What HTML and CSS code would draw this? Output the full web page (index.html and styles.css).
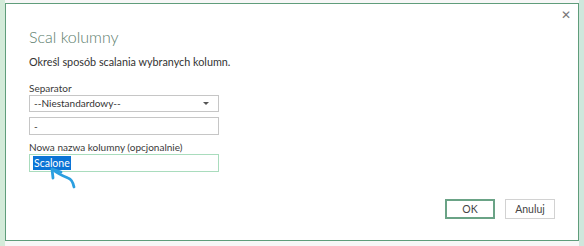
FILE: index.html
```html
<!DOCTYPE html>
<html lang="pl">
<head>
  <meta charset="UTF-8">
  <title>Scal kolumny</title>
  <link rel="stylesheet" href="styles.css">
</head>
<body>
  <div class="dialog">
    <div class="dialog-top">
      <span class="close">&#x2715;</span>
    </div>
    <h1>Scal kolumny</h1>
    <p class="lead">Określ sposób scalania wybranych kolumn.</p>

    <label class="label">Separator</label>
    <div class="select">
      <span>--Niestandardowy--</span>
      <span class="caret"></span>
    </div>
    <div class="field">-</div>

    <label class="label">Nowa nazwa kolumny (opcjonalnie)</label>
    <div class="field field-active">
      <span class="selected">Scalone</span>
      <!-- odręczna strzałka -->
      <svg class="pointer" width="30" height="26" viewBox="0 0 30 26">
        <path d="M3 3 C 9 8, 14 10, 19 12 C 22 13, 24 16, 25 21" fill="none" stroke="#2b9fe0" stroke-width="2.8" stroke-linecap="round"/>
        <path d="M4 12 L 3 3 L 12 6" fill="none" stroke="#2b9fe0" stroke-width="2.8" stroke-linecap="round" stroke-linejoin="round"/>
      </svg>
    </div>

    <div class="actions">
      <button class="btn btn-primary">OK</button>
      <button class="btn">Anuluj</button>
    </div>
  </div>
</body>
</html>
```

FILE: styles.css
```css
* {
  box-sizing: border-box;
}
body {
  margin: 0;
  width: 584px;
  height: 246px;
  overflow: hidden;
  font-family: 'Lato', sans-serif;
  color: #333;
  background:
    linear-gradient(to right, #d3ebd9 0, #d3ebd9 5px, transparent 5px),
    linear-gradient(to left, #cfe7dc 0, #cfe7dc 5px, transparent 5px),
    #f7f7f7;
  padding: 3px 5px 5px 5px;
}
.dialog {
  position: relative;
  height: 238px;
  background: white;
  border: 1px solid #5f9d7b;
  padding: 0 23px 0 23px;
}
.dialog-top {
  display: flex;
  justify-content: flex-end;
  height: 20px;
  margin-right: -16px;
  padding-top: 4px;
}
.close {
  font-family: 'DejaVu Sans', sans-serif;
  font-size: 12px;
  line-height: 14px;
  color: #777;
}
h1 {
  margin: 2px 0 0;
  font-size: 16px;
  font-weight: 300;
  color: #5b7d6c;
  line-height: 22px;
}
.lead {
  margin: 7px 0 12px;
  font-size: 10.8px;
  line-height: 14px;
}
.label {
  display: block;
  font-size: 10px;
  line-height: 14px;
  color: #3a3a3a;
}
.select, .field {
  width: 190px;
  height: 17px;
  border: 1px solid #c6c6c6;
  font-size: 10px;
  line-height: 15px;
  padding: 0 4px;
  display: flex;
  align-items: center;
  justify-content: space-between;
}
.field {
  height: 18px;
  margin: 5px 0 5px;
}
.caret {
  width: 0;
  height: 0;
  border-left: 3px solid transparent;
  border-right: 3px solid transparent;
  border-top: 3px solid #555;
  margin-right: 5px;
}
.field-active {
  position: relative;
  border-color: #a9dcbd;
  margin-top: 0;
  padding-left: 3px;
}
.selected {
  background: #0a74d6;
  color: white;
  padding: 0 1px;
  line-height: 14px;
  font-size: 10.5px;
}
.pointer {
  position: absolute;
  left: 19px;
  top: 11px;
}
.actions {
  display: flex;
  justify-content: flex-end;
  gap: 10px;
  margin-top: 27px;
}
.btn {
  width: 50px;
  height: 20px;
  background: white;
  border: 1px solid #d2d2d2;
  font-family: 'Lato', sans-serif;
  font-size: 10.5px;
  color: #444;
  padding: 0;
}
.btn-primary {
  border: 2px solid #6aa386;
}
```
